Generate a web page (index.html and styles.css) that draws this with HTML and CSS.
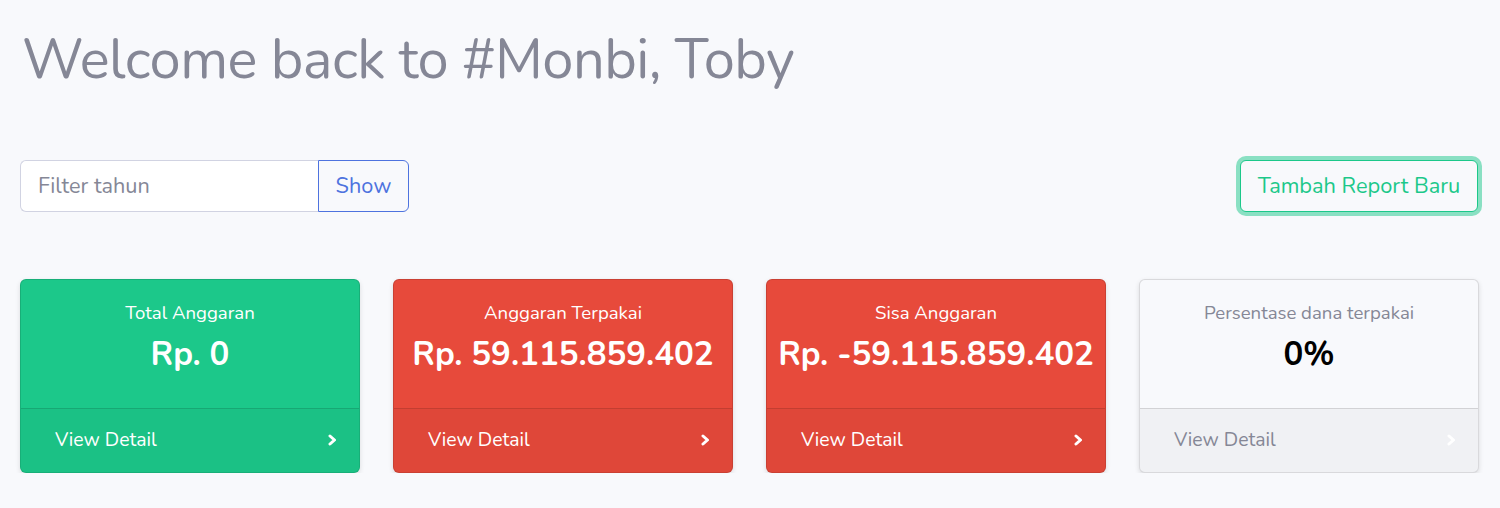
FILE: index.html
```html
<!DOCTYPE html>
<html lang="id">
<head>
<meta charset="utf-8">
<title>Monbi Dashboard</title>
<link rel="stylesheet" href="styles.css">
</head>
<body>
<div class="page">
  <h1 class="welcome">Welcome back to #Monbi, Toby</h1>

  <div class="toolbar">
    <div class="filter">
      <input class="filter-input" type="text" placeholder="Filter tahun">
      <button class="btn-show">Show</button>
    </div>
    <button class="btn-add">Tambah Report Baru</button>
  </div>

  <div class="cards">
    <div class="card card-green">
      <div class="card-body">
        <div class="card-title">Total Anggaran</div>
        <div class="card-value">Rp. 0</div>
      </div>
      <div class="card-footer">
        <span>View Detail</span>
        <svg class="chev" width="9" height="12" viewBox="0 0 9 12"><polyline points="2,2 6.5,6 2,10" fill="none" stroke="currentColor" stroke-width="3" stroke-linecap="round" stroke-linejoin="round"/></svg>
      </div>
    </div>
    <div class="card card-red">
      <div class="card-body">
        <div class="card-title">Anggaran Terpakai</div>
        <div class="card-value">Rp. 59.115.859.402</div>
      </div>
      <div class="card-footer">
        <span>View Detail</span>
        <svg class="chev" width="9" height="12" viewBox="0 0 9 12"><polyline points="2,2 6.5,6 2,10" fill="none" stroke="currentColor" stroke-width="3" stroke-linecap="round" stroke-linejoin="round"/></svg>
      </div>
    </div>
    <div class="card card-red">
      <div class="card-body">
        <div class="card-title">Sisa Anggaran</div>
        <div class="card-value">Rp. -59.115.859.402</div>
      </div>
      <div class="card-footer">
        <span>View Detail</span>
        <svg class="chev" width="9" height="12" viewBox="0 0 9 12"><polyline points="2,2 6.5,6 2,10" fill="none" stroke="currentColor" stroke-width="3" stroke-linecap="round" stroke-linejoin="round"/></svg>
      </div>
    </div>
    <div class="card card-light">
      <div class="card-body">
        <div class="card-title">Persentase dana terpakai</div>
        <div class="card-value">0%</div>
      </div>
      <div class="card-footer">
        <span>View Detail</span>
        <svg class="chev" width="9" height="12" viewBox="0 0 9 12"><polyline points="2,2 6.5,6 2,10" fill="none" stroke="currentColor" stroke-width="3" stroke-linecap="round" stroke-linejoin="round"/></svg>
      </div>
    </div>
  </div>
</div>
</body>
</html>
```

FILE: styles.css
```css
* { box-sizing: border-box; }

html, body {
  margin: 0;
  padding: 0;
}

body {
  background: #f8f9fc;
  font-family: "Nunito", "Lato", "Noto Sans", sans-serif;
  color: #858796;
}

.page {
  padding: 0 20px;
}

.welcome {
  margin: 26px 0 0 2px;
  font-size: 56px;
  font-weight: 400;
  line-height: 1.2;
  letter-spacing: -0.55px;
  color: #858796;
}

.toolbar {
  display: flex;
  justify-content: space-between;
  align-items: center;
  margin-top: 67px;
}

.filter {
  display: flex;
  height: 52px;
}

.filter-input {
  width: 298px;
  height: 52px;
  border: 1px solid #d1d3e2;
  border-right: none;
  border-radius: 6px 0 0 6px;
  background: #fff;
  padding: 0 17px;
  font-family: inherit;
  font-size: 21.7px;
  color: #6e707e;
  outline: none;
}

.filter-input::placeholder {
  color: #858796;
}

.btn-show {
  width: 91px;
  height: 52px;
  border: 1px solid #4e73df;
  border-radius: 0 6px 6px 0;
  background: transparent;
  color: #4e73df;
  font-family: inherit;
  font-size: 21.7px;
  padding: 0;
}

.btn-add {
  height: 52px;
  width: 238px;
  margin-right: 2px;
  border: 1px solid #1cc88a;
  border-radius: 6px;
  background: #f8f9fc;
  color: #1cc88a;
  font-family: inherit;
  font-size: 21.8px;
  box-shadow: 0 0 0 4px rgba(28, 200, 138, 0.5);
  padding: 0;
}

.cards {
  display: grid;
  grid-template-columns: repeat(4, 340px);
  column-gap: 33px;
  margin-top: 67px;
}

.card {
  border: 1px solid rgba(0, 0, 0, 0.125);
  border-radius: 6px;
  overflow: hidden;
  box-shadow: 0 2px 5px rgba(0, 0, 0, 0.12);
}

.card-body {
  height: 128px;
  display: flex;
  flex-direction: column;
  align-items: center;
  padding-top: 21px;
}

.card-title {
  font-size: 18.6px;
  line-height: 24px;
}

.card-value {
  margin-top: 8px;
  font-size: 33px;
  font-weight: 700;
  line-height: 44px;
}

.card-footer {
  height: 64px;
  border-top: 1px solid rgba(0, 0, 0, 0.125);
  background: rgba(0, 0, 0, 0.03);
  display: flex;
  align-items: center;
  justify-content: space-between;
  padding: 0 22px 2px 34px;
  font-size: 19.4px;
}

.chev { display: block; }

.card-green { background: #1cc88a; color: #fff; }
.card-red { background: #e74a3b; color: #fff; }
.card-light { background: #f8f9fc; color: #858796; }
.card-light .card-value { color: #000; }
.card-light .card-footer { color: #858796; }
.card-light .chev { color: #fff; }
```
